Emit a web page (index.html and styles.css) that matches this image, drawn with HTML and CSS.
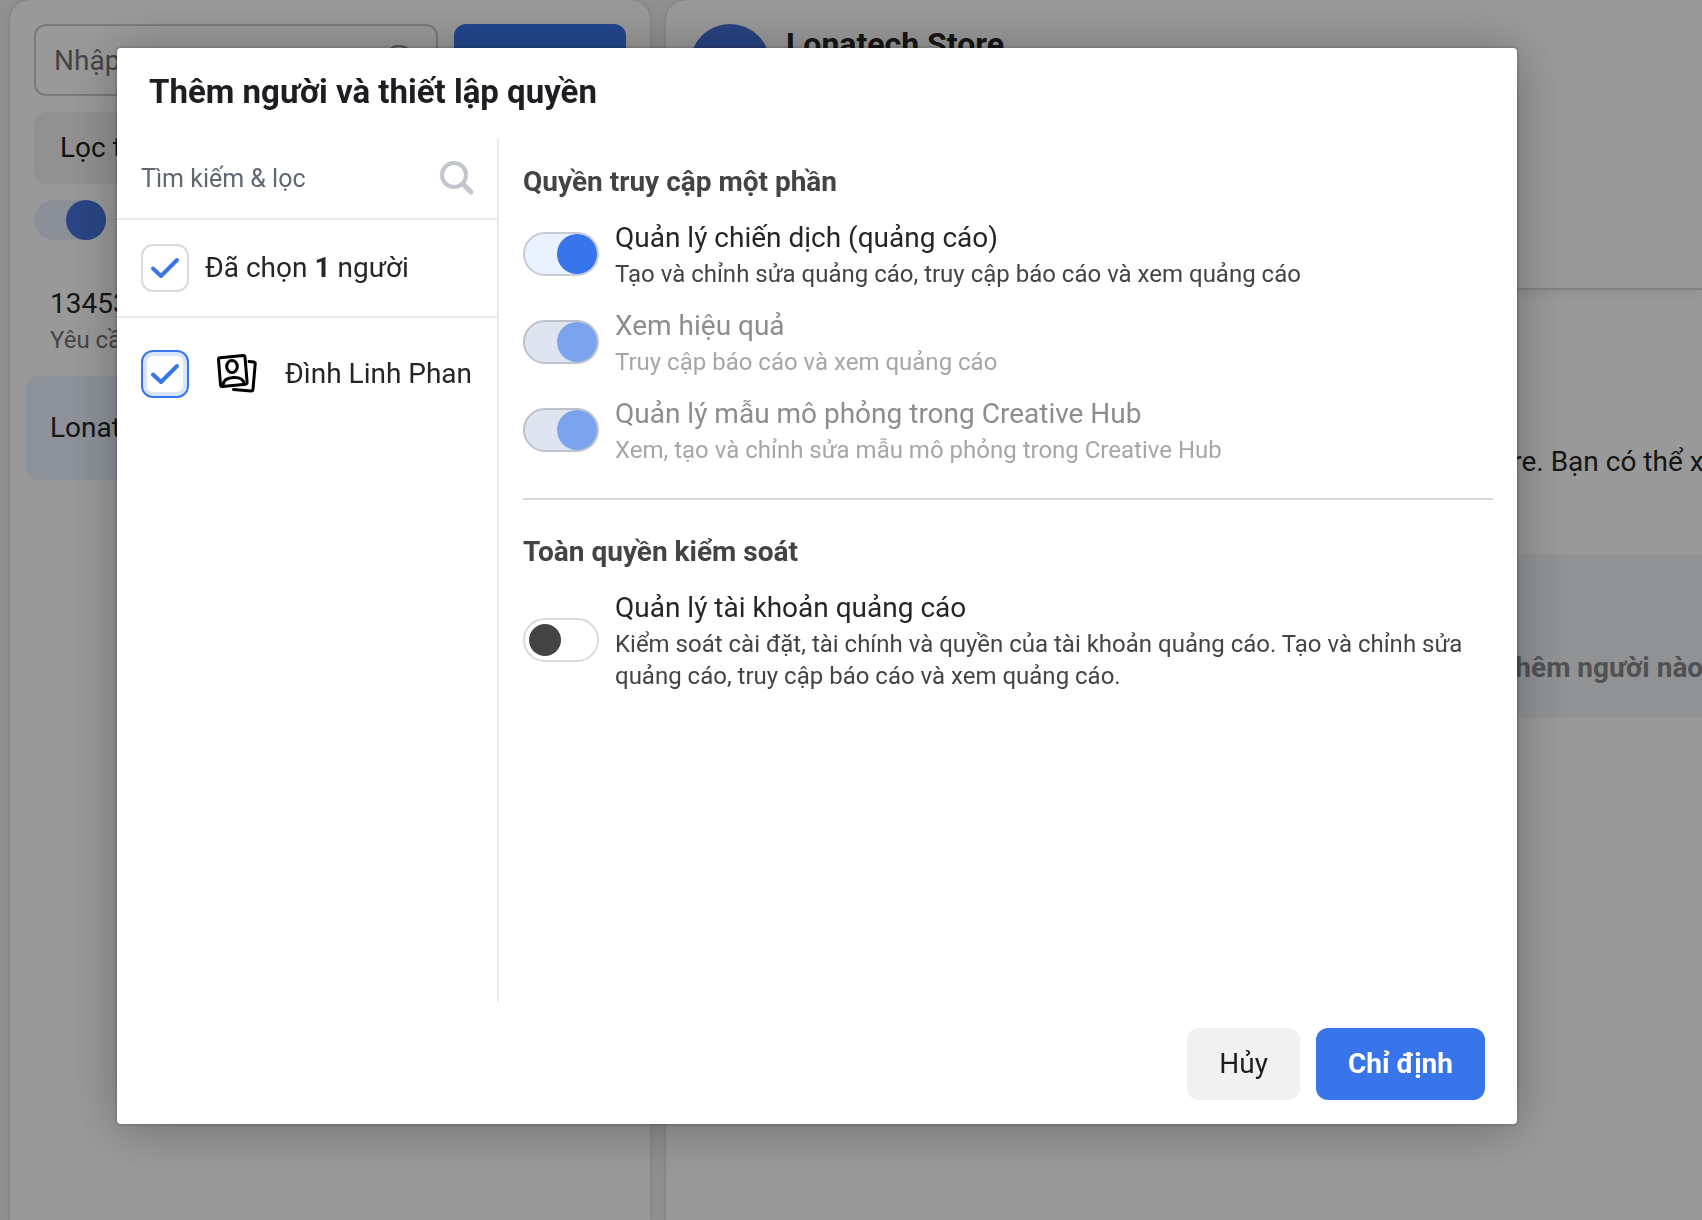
FILE: index.html
```html
<!DOCTYPE html>
<html lang="vi">
<head>
<meta charset="utf-8">
<meta name="viewport" content="width=device-width, initial-scale=1">
<title>Thêm người và thiết lập quyền</title>
<link rel="stylesheet" href="styles.css">
</head>
<body>
<div class="page">
  <aside class="card accounts">
    <div class="accounts-search">
      <div class="account-field">
        <input type="text" placeholder="Nhập" aria-label="Nhập">
        <svg class="field-icon" viewBox="0 0 30 30" aria-hidden="true"><circle cx="15" cy="15" r="14"/></svg>
      </div>
      <button class="btn btn-primary btn-add" type="button" aria-label="Thêm"></button>
    </div>
    <button class="btn btn-filter" type="button">Lọc theo</button>
    <input class="switch-plain" type="checkbox" checked aria-label="Lọc">
    <ul class="account-list">
      <li class="account">
        <span class="account-name">13453</span>
        <span class="account-note">Yêu cầu</span>
      </li>
      <li class="account is-selected"><span class="account-name">Lonatech Store</span></li>
    </ul>
  </aside>
  <main class="card detail">
    <header class="detail-header">
      <span class="avatar"></span>
      <h1>Lonatech Store</h1>
    </header>
    <p class="detail-intro">Lonatech Store. Bạn có thể x</p>
    <p class="detail-empty">Thêm người nào</p>
  </main>
</div>

<div class="overlay">
  <section class="modal" role="dialog" aria-modal="true" aria-labelledby="modal-title">
    <h2 class="modal-title" id="modal-title">Thêm người và thiết lập quyền</h2>
    <div class="modal-body">
      <div class="people">
        <div class="people-search">
          <input type="text" placeholder="Tìm kiếm &amp; lọc" aria-label="Tìm kiếm &amp; lọc">
          <svg class="search-icon" viewBox="0 0 36 36" aria-hidden="true"><circle cx="15" cy="15" r="12"/><path d="M24 24l8 8"/></svg>
        </div>
        <div class="people-count">
          <span class="tick">
            <input type="checkbox" id="all" checked>
            <svg viewBox="0 0 48 48" aria-hidden="true"><path d="M12 24.500L20 32L36 16"/></svg>
          </span>
          <label for="all">Đã chọn <b>1</b> người</label>
        </div>
        <div class="person">
          <span class="tick is-focused">
            <input type="checkbox" id="person" checked>
            <svg viewBox="0 0 48 48" aria-hidden="true"><path d="M12 24.500L20 32L36 16"/></svg>
          </span>
          <svg class="person-icon" viewBox="0 0 42 42" aria-hidden="true">
            <path d="M4.200 4.800L27.200 2.500Q28.800 2.400 29 4.200L31.100 29.200Q31.200 31 29.400 31.200L6.500 33.500Q4.700 33.600 4.500 31.800L2.500 6.700Q2.400 5 4.200 4.800Z"/>
            <ellipse cx="16" cy="13.500" rx="5.300" ry="6"/>
            <path d="M7 33C7 27.500 11 25 17 24.600C23 24.200 27.500 26.500 28.500 31"/>
            <path d="M33 8.500L37.800 9Q39.400 9.200 39.200 10.800L37 36Q36.800 38 35 37.900L17.500 36.500"/>
          </svg>
          <label for="person">Đình Linh Phan</label>
        </div>
      </div>
      <div class="permissions">
        <h3>Quyền truy cập một phần</h3>
        <div class="permission-list">
          <label class="permission">
            <input class="switch" type="checkbox" checked>
            <span class="permission-text">
              <span class="permission-name">Quản lý chiến dịch (quảng cáo)</span>
              <span class="permission-note">Tạo và chỉnh sửa quảng cáo, truy cập báo cáo và xem quảng cáo</span>
            </span>
          </label>
          <label class="permission is-locked">
            <input class="switch" type="checkbox" checked disabled>
            <span class="permission-text">
              <span class="permission-name">Xem hiệu quả</span>
              <span class="permission-note">Truy cập báo cáo và xem quảng cáo</span>
            </span>
          </label>
          <label class="permission is-locked">
            <input class="switch" type="checkbox" checked disabled>
            <span class="permission-text">
              <span class="permission-name">Quản lý mẫu mô phỏng trong Creative Hub</span>
              <span class="permission-note">Xem, tạo và chỉnh sửa mẫu mô phỏng trong Creative Hub</span>
            </span>
          </label>
        </div>
        <hr>
        <h3>Toàn quyền kiểm soát</h3>
        <div class="permission-list">
          <label class="permission">
            <input class="switch" type="checkbox">
            <span class="permission-text">
              <span class="permission-name">Quản lý tài khoản quảng cáo</span>
              <span class="permission-note">Kiểm soát cài đặt, tài chính và quyền của tài khoản quảng cáo. Tạo và chỉnh sửa quảng cáo, truy cập báo cáo và xem quảng cáo.</span>
            </span>
          </label>
        </div>
      </div>
    </div>
    <footer class="modal-footer">
      <button class="btn btn-cancel" type="button">Hủy</button>
      <button class="btn btn-primary" type="button">Chỉ định</button>
    </footer>
  </section>
</div>
</body>
</html>
```
FILE: styles.css
```css
* { box-sizing: border-box; }

body {
  margin: 0;
  background: #f1f1f1;
  color: #262626;
  font: 28px/36px Roboto, "Noto Sans", sans-serif;
}

h1, h2, h3, p, ul { margin: 0; padding: 0; }

ul { list-style: none; }

input, button { margin: 0; font: inherit; }

svg { fill: none; stroke-linecap: round; stroke-linejoin: round; }

/* Background page */

.page {
  display: grid;
  grid-template-columns: 640px minmax(0, 1fr);
  gap: 16px;
  height: 100vh;
  padding-left: 10px;
  overflow: hidden;
}

.card {
  overflow: hidden;
  border-radius: 20px 20px 0 0;
  background: #fff;
  box-shadow: 0 0 12px rgba(0, 0, 0, .08), 0 0 2px rgba(0, 0, 0, .16);
}

.accounts { padding: 24px; }

.detail { border-top-right-radius: 0; }

.accounts-search {
  display: flex;
  gap: 16px;
  margin-bottom: 16px;
}

.account-field {
  display: flex;
  flex: 1;
  align-items: center;
  min-width: 0;
  height: 72px;
  padding: 0 22px 0 18px;
  border: 2px solid #ccc;
  border-radius: 12px;
}

.account-field input {
  flex: 1;
  min-width: 0;
  padding: 2px 0 0;
  border: 0;
  background: none;
}

.account-field input::placeholder { color: #737373; opacity: 1; }

.field-icon { width: 30px; height: 30px; stroke: #8a8d91; stroke-width: 2; }

.btn {
  height: 72px;
  padding: 0 32px;
  border: 0;
  border-radius: 12px;
}

.btn-primary { background: #3875ea; color: #fff; font-weight: 700; }

.btn-cancel { background: #f1f1f1; color: #1c1e21; }

.btn-add { width: 172px; }

.btn-filter {
  display: block;
  width: 592px;
  max-width: 100%;
  padding: 0 26px;
  background: #f1f1f1;
  color: #1c1e21;
  text-align: left;
}

.switch-plain {
  display: flex;
  justify-content: flex-end;
  width: 72px;
  height: 40px;
  margin-top: 16px;
  border-radius: 20px;
  background: #e6effe;
  appearance: none;
}

.switch-plain::before {
  width: 40px;
  height: 40px;
  border-radius: 50%;
  background: #4575dd;
  content: "";
}

.account-list {
  display: grid;
  gap: 8px;
  margin: 36px -8px 0;
}

.account {
  display: grid;
  align-content: center;
  height: 92px;
  padding: 0 24px;
  border-radius: 12px;
}

.account.is-selected { height: 104px; background: #ebf2ff; }

.account-note { color: #737373; font-size: 24px; }

.detail-header {
  display: flex;
  gap: 16px;
  height: 290px;
  padding: 24px;
  border-bottom: 2px solid #d8d8de;
  box-shadow: 0 2px 12px rgba(0, 0, 0, .08);
}

.avatar {
  width: 80px;
  height: 80px;
  border-radius: 50%;
  background: #4470d8;
}

.detail h1 { font-size: 32px; line-height: 40px; }

.detail-intro {
  padding: 154px 0 74px 682px;
  white-space: nowrap;
}

.detail-empty {
  padding: 96px 0 32px 832px;
  background: #f1f4f7;
  color: #858789;
  font-weight: 700;
  white-space: nowrap;
}

/* Dialog */

.overlay {
  position: fixed;
  inset: 0;
  padding: 48px 185px 96px 117px;
  overflow: auto;
  background: rgba(0, 0, 0, .4);
}

.modal {
  border-radius: 4px;
  background: #fff;
  box-shadow: 0 4px 52px rgba(0, 0, 0, .3), 0 0 0 2px rgba(0, 0, 0, .1);
}

.modal-title {
  padding: 24px 32px 26px;
  color: #1c1e21;
  font-size: 33px;
  line-height: 40px;
}

.modal-body {
  display: grid;
  grid-template-columns: 382px minmax(0, 1fr);
  min-height: 864px;
}

.people { border-right: 2px solid #e9e9e9; }

.people-search,
.people-count,
.person {
  display: flex;
  align-items: center;
  padding: 0 24px;
}

.people-search {
  height: 82px;
  padding-right: 22px;
  border-bottom: 2px solid #e9e9e9;
}

.people-search input {
  flex: 1;
  min-width: 0;
  padding: 2px 0 0;
  border: 0;
  background: none;
  font-size: 25px;
}

.people-search input::placeholder { color: #606770; opacity: 1; }

.search-icon { width: 36px; height: 36px; stroke: #c3c5cc; stroke-width: 4; }

.search-icon path { stroke-width: 5; }

.people-count {
  gap: 16px;
  height: 98px;
  border-bottom: 2px solid #e9e9e9;
}

.person { height: 112px; white-space: nowrap; }

.tick { display: grid; flex: none; width: 48px; height: 48px; }

.tick > * { grid-area: 1 / 1; }

.tick input {
  border: 2px solid #dadada;
  border-radius: 12px;
  background: #fff;
  appearance: none;
}

.tick.is-focused input {
  border-color: #3875ea;
  box-shadow: inset 0 0 0 4px #d9e5fb;
}

.tick svg { stroke: #3875ea; stroke-width: 4; pointer-events: none; }

.person-icon {
  flex: none;
  width: 42px;
  height: 42px;
  margin: 0 27px;
  stroke: #000;
  stroke-width: 3;
}

.permissions { padding: 26px 24px; }

.permissions h3 { margin-bottom: 18px; color: #444; font-size: 28px; }

.permissions hr {
  height: 2px;
  margin: 32px 0 34px;
  border: 0;
  background: #d8d8d8;
}

.permission-list { display: grid; gap: 16px; }

.permission { display: flex; align-items: center; gap: 16px; }

.permission-text { display: grid; }

.permission-name { line-height: 40px; }

.permission-note { color: #444; font-size: 24px; line-height: 32px; }

.is-locked .permission-name { color: #8d8d8d; }

.is-locked .permission-note { color: #a6a6a6; }

.switch {
  display: flex;
  flex: none;
  align-items: center;
  width: 76px;
  height: 44px;
  padding: 0 4px;
  border: 2px solid #dadada;
  border-radius: 22px;
  background: #fff;
  appearance: none;
}

.switch::before {
  width: 32px;
  height: 32px;
  border-radius: 50%;
  background: #444;
  content: "";
}

.switch:checked {
  justify-content: flex-end;
  padding: 0;
  border-color: #c8cbd6;
  background: #ebf2ff;
}

.switch:checked::before { width: 40px; height: 40px; background: #3875ea; }

.switch:disabled { border-color: #bdc1ca; background: #dee5f1; }

.switch:disabled::before { background: #7ba2ed; }

.modal-footer {
  display: flex;
  justify-content: flex-end;
  gap: 16px;
  padding: 26px 32px 24px;
}
```
